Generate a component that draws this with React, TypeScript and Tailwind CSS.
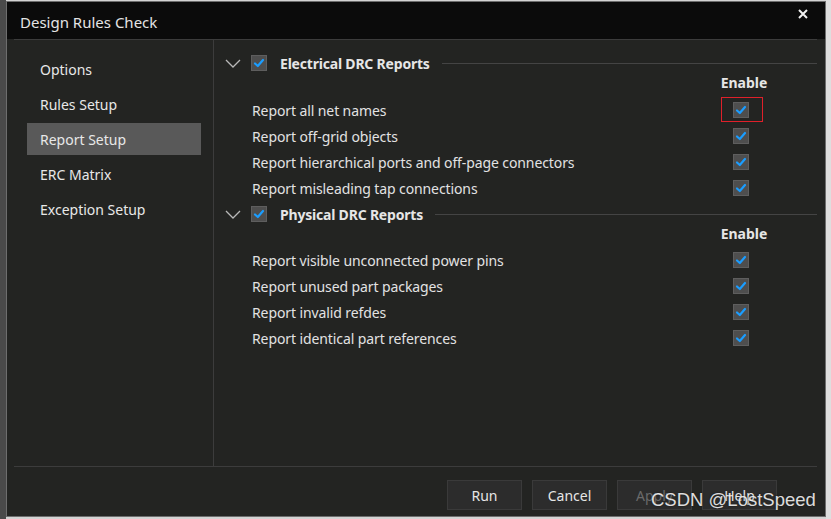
import React from "react"

const font = { fontFamily: '"Noto Sans", "Liberation Sans", sans-serif' }

const navItems = ["Options", "Rules Setup", "Report Setup", "ERC Matrix", "Exception Setup"]

const electrical = [
  "Report all net names",
  "Report off-grid objects",
  "Report hierarchical ports and off-page connectors",
  "Report misleading tap connections",
]

const physical = [
  "Report visible unconnected power pins",
  "Report unused part packages",
  "Report invalid refdes",
  "Report identical part references",
]

function Check() {
  return (
    <div className="flex h-[16px] w-[16px] items-center justify-center border border-[#5e5e5e] bg-[#4e4e4e]">
      <svg width="12" height="12" viewBox="0 0 12 12" fill="none">
        <path d="M2 6.5 L4.8 9 L10 3" stroke="#1a9dff" strokeWidth="2.2" strokeLinecap="round" strokeLinejoin="round" />
      </svg>
    </div>
  )
}

function Chevron() {
  return (
    <svg width="16" height="9" viewBox="0 0 16 9" fill="none">
      <path d="M1 1 L8 8 L15 1" stroke="#b8b8b8" strokeWidth="1.3" />
    </svg>
  )
}

function Section({ title, rows, marked }: { title: string; rows: string[]; marked?: boolean }) {
  return (
    <div>
      <div className="flex h-[20px] items-center pl-[11px]">
        <Chevron />
        <div className="ml-[10px]">
          <Check />
        </div>
        <span className="ml-[13px] text-[14px] font-bold tracking-[-0.2px] text-[#e6e6e6]">{title}</span>
        <div className="ml-[12px] h-px flex-1 bg-[#444444]" />
      </div>
      <div className="flex h-[18px] items-center justify-end pr-[43px]">
        <span className="w-[60px] text-center text-[14px] font-bold text-[#e6e6e6]">Enable</span>
      </div>
      <div className={marked ? "mt-[6px]" : "mt-[5px]"}>
        {rows.map((r, i) => (
          <div key={r} className="flex h-[26px] items-center pl-[38px] pr-[68px]">
            <span className="flex-1 text-[14px] tracking-[-0.1px] text-[#e2e2e2]">{r}</span>
            <div className="relative">
              <Check />
              {marked && i === 0 && (
                <div className="absolute -left-[12px] -top-[5px] h-[25px] w-[42px] border border-[#e0202a]" />
              )}
            </div>
          </div>
        ))}
      </div>
    </div>
  )
}

function Button({ label, disabled }: { label: string; disabled?: boolean }) {
  return (
    <div
      className={
        "flex h-[30px] w-[75px] items-center justify-center border border-[#3a3a3a] bg-[#2c2c2c] text-[14px] " +
        (disabled ? "text-[#6a6a6a]" : "text-[#e6e6e6]")
      }
    >
      {label}
    </div>
  )
}

export default function App() {
  return (
    <div className="relative flex h-[519px] w-[831px] bg-[#d4d4d4]" style={font}>
      <div className="w-[6px] bg-[#4a4a4a]" />
      <div className="mt-[1px] flex h-[516px] w-[820px] flex-col border border-[#6e6e6e] bg-[#232422]">
        <div className="flex h-[37px] items-center justify-between bg-[#0b0b0b] pl-[13px] pr-[17px] pt-[3px]">
          <span className="text-[15px] text-[#e4e4e4]">Design Rules Check</span>
          <svg width="10" height="10" viewBox="0 0 10 10" className="-mt-[16px]">
            <path d="M1 1 L9 9 M9 1 L1 9" stroke="#f0f0f0" strokeWidth="2" />
          </svg>
        </div>
        <div className="flex flex-1 flex-col pl-[7px] pr-[8px]">
          <div className="flex flex-1 border-y border-[#3c3c3c]">
            <div className="w-[200px] border-r border-[#3c3c3c] pt-[13px]">
              {navItems.map((n) => (
                <div
                  key={n}
                  className={
                    "mb-[3px] ml-[13px] flex h-[32px] w-[174px] items-center pl-[13px] text-[14px] text-[#e8e8e8] " +
                    (n === "Report Setup" ? "bg-[#595959]" : "")
                  }
                >
                  {n}
                </div>
              ))}
            </div>
            <div className="flex-1 pt-[13px]">
              <Section title="Electrical DRC Reports" rows={electrical} marked />
              <div className="mt-[3px]">
                <Section title="Physical DRC Reports" rows={physical} />
              </div>
            </div>
          </div>
          <div className="flex h-[49px] justify-end gap-[10px] pr-[40px] pt-[13px]">
            <Button label="Run" />
            <Button label="Cancel" />
            <Button label="Apply" disabled />
            <Button label="Help" />
          </div>
        </div>
      </div>
      <div className="flex-1 bg-[#dedede]" />
      <div
        className="absolute left-[651px] top-[486px] text-[18.5px] text-white/85 [text-shadow:0_0_2px_rgba(0,0,0,0.6)]"
        style={{ fontFamily: '"Liberation Sans", Arial, sans-serif' }}
      >
        CSDN @LostSpeed
      </div>
    </div>
  )
}
